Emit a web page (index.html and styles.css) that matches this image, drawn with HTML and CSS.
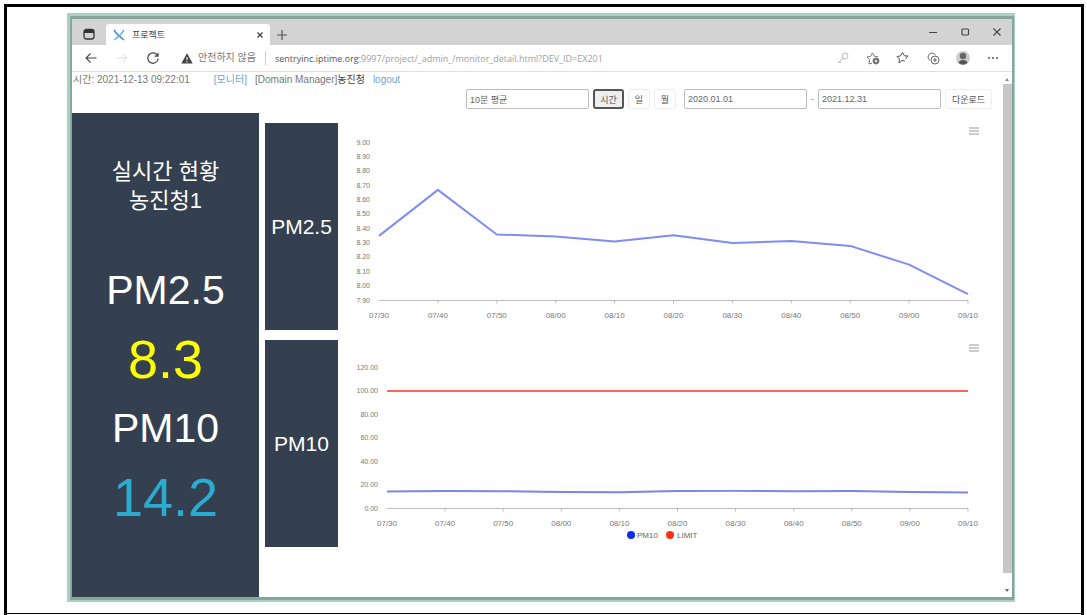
FILE: index.html
```html
<!DOCTYPE html>
<html lang="ko">
<head>
<meta charset="utf-8">
<title>프로젝트</title>
<link rel="stylesheet" href="styles.css">
</head>
<body>
<div class="sheet">
<div class="cell">
<div class="window">
<div class="window-inner">
  <header class="titlebar">
    <button class="tab-menu" aria-label="탭 메뉴"><svg width="12" height="12" viewBox="0 0 12 12"><rect x="1" y="1.500" width="10" height="9.500" rx="2.500" fill="none" stroke="#333" stroke-width="1.300"/><path d="M1 5V3.500Q1 1.500 3 1.500H9Q11 1.500 11 3.500V5Z" fill="#333"/></svg></button>
    <div class="tab">
      <svg width="12" height="12" viewBox="0 0 12 12" fill="none" stroke="#3b8fe0" stroke-width="1.500"><path d="M1 1Q4 6 11 11"/><path d="M11 1Q8 6 1 11" stroke="#74b4ee"/></svg>
      <span class="tab-title">프로젝트</span>
      <button class="tab-close" aria-label="탭 닫기"><svg width="6" height="6" viewBox="0 0 6 6" stroke="#444" stroke-width="1.300"><path d="M.5.5l5 5M5.500.5l-5 5"/></svg></button>
    </div>
    <button class="new-tab" aria-label="새 탭"><svg width="10" height="10" viewBox="0 0 10 10" stroke="#555" stroke-width="1.200"><path d="M5 0v10M0 5h10"/></svg></button>
    <div class="window-controls">
      <button aria-label="최소화"><svg width="10" height="10" viewBox="0 0 10 10" stroke="#444"><path d="M1 5.500h8"/></svg></button>
      <button aria-label="최대화"><svg width="10" height="10" viewBox="0 0 10 10" fill="none" stroke="#444" stroke-width="1.200"><rect x="2" y="2" width="6.500" height="6" rx="1"/></svg></button>
      <button aria-label="닫기"><svg width="10" height="10" viewBox="0 0 10 10" stroke="#444" stroke-width="1.100"><path d="M1.500 1.500l7 7M8.500 1.500l-7 7"/></svg></button>
    </div>
  </header>

  <div class="addressbar">
    <button class="nav" aria-label="뒤로"><svg width="12" height="12" viewBox="0 0 12 12" fill="none" stroke="#444" stroke-width="1.100"><path d="M11.500 6H1M5.500 1.500L1 6l4.500 4.500"/></svg></button>
    <button class="nav" aria-label="앞으로"><svg width="12" height="12" viewBox="0 0 12 12" fill="none" stroke="#ddd"><path d="M1 6h10M6.500 2L11 6l-4.500 4"/></svg></button>
    <button class="nav" aria-label="새로 고침"><svg width="12" height="12" viewBox="0 0 12 12" fill="none" stroke="#444" stroke-width="1.200"><path d="M10.800 4A5.200 5.200 0 1 0 11.200 6.500M11 .8V4.200H7.500"/></svg></button>
    <svg class="warn" width="12" height="11" viewBox="0 0 12 11"><path d="M6 .3L11.700 10.500H.3Z" fill="#444"/><path d="M6 4v3.300M6 8.200v1.200" stroke="#fff" stroke-width="1.100"/></svg>
    <span class="insecure">안전하지 않음</span>
    <span class="url"><b>sentryinc.iptime.org</b>:9997/project/_admin_/monitor_detail.html?DEV_ID=EX201</span>
    <div class="browser-tools">
      <button aria-label="비밀번호"><svg width="14" height="14" viewBox="0 0 14 14" fill="none" stroke="#bbb"><circle cx="9" cy="5" r="3"/><path d="M7 7.500L2.500 11.500H5"/></svg></button>
      <button aria-label="즐겨찾기에 추가"><svg width="14" height="14" viewBox="0 0 14 14" fill="none" stroke="#777"><path d="M6 12L3 13 3.500 8.500 1 6l3.500-.7L6.500 2l2 3.300 3.500.5"/><circle cx="10" cy="10" r="3" fill="#666"/><path d="M10 8.500v3M8.500 10h3" stroke="#fff"/></svg></button>
      <button aria-label="즐겨찾기"><svg width="14" height="14" viewBox="0 0 14 14" fill="none" stroke="#555"><path d="M9 10L6 9.500 3 12l.5-4L1 5.500l3.500-.6L6.500 1.500l2 3.400H12L9.500 8"/></svg></button>
      <button aria-label="컬렉션"><svg width="14" height="14" viewBox="0 0 14 14" fill="none" stroke="#666"><path d="M4 9.500A4 4 0 1 1 9.500 4"/><circle cx="9" cy="9" r="4"/><path d="M9 7v4M7 9h4"/></svg></button>
      <button aria-label="프로필"><svg width="14" height="14" viewBox="0 0 14 14"><circle cx="7" cy="7" r="7" fill="#ccc"/><circle cx="7" cy="5" r="3.200" fill="#666"/><path d="M2.500 12Q3 9 7 9t4.500 3Q7 15.500 2.500 12Z" fill="#555"/></svg></button>
      <button aria-label="설정 및 기타"><svg width="14" height="14" viewBox="0 0 14 14" fill="#555"><circle cx="3" cy="7" r="1"/><circle cx="7" cy="7" r="1"/><circle cx="11" cy="7" r="1"/></svg></button>
    </div>
  </div>

  <div class="viewport">
    <div class="page">
      <div class="status"><span>시간: 2021-12-13 09:22:01</span><a class="monitor" href="#monitor">[모니터]</a><span>[Domain Manager]<span class="name">농진청</span></span><a class="logout" href="#logout">logout</a></div>
      <form class="filters">
        <input class="field" type="text" aria-label="평균 단위" value="10분 평균">
        <button class="btn active" type="button">시간</button>
        <button class="btn" type="button">일</button>
        <button class="btn" type="button">월</button>
        <input class="field start" type="text" aria-label="시작일" value="2020.01.01">
        <span class="dash">-</span>
        <input class="field" type="text" aria-label="종료일" value="2021.12.31">
        <button class="btn download" type="button">다운로드</button>
      </form>
      <main class="dashboard">
        <aside class="live">
          <h1 class="live-title">실시간 현황<br>농진청1</h1>
          <div class="metric">PM2.5</div>
          <div class="value yellow">8.3</div>
          <div class="metric">PM10</div>
          <div class="value blue">14.2</div>
        </aside>
        <div class="charts">
          <section class="row">
            <h2 class="label">PM2.5</h2>
            <div class="chart"><svg id="pm25" viewBox="0 0 664 207" role="img" aria-label="PM2.5 차트"></svg>
            <button class="menu" aria-label="차트 메뉴"><svg width="10" height="8" viewBox="0 0 10 8" stroke="#999"><path d="M0 1h10M0 4h10M0 7h10"/></svg></button></div>
          </section>
          <section class="row">
            <h2 class="label">PM10</h2>
            <div class="chart"><svg id="pm10" viewBox="0 0 664 207" role="img" aria-label="PM10 차트"></svg>
            <button class="menu" aria-label="차트 메뉴"><svg width="10" height="8" viewBox="0 0 10 8" stroke="#999"><path d="M0 1h10M0 4h10M0 7h10"/></svg></button></div>
          </section>
        </div>
      </main>
    </div>
    <div class="scrollbar"><span class="arrow up"></span><span class="thumb"></span><span class="arrow down"></span></div>
  </div>
</div>
</div>
</div>
</div>
<script src="charts.js"></script>
</body>
</html>
```
FILE: styles.css
```css
* { box-sizing: border-box; }
body {
  margin: 0;
  background: #fff;
  font-family: "Liberation Sans", "Noto Sans CJK KR", sans-serif;
  font-size: 10px;
  color: #777;
}
button {
  border: 0;
  padding: 0;
  background: none;
  font: inherit;
  color: inherit;
  display: flex;
  align-items: center;
  justify-content: center;
}
svg { display: block; }
a { color: #6fa6d4; text-decoration: none; }

.sheet {
  margin: 4px 3px 0 4px;
  min-height: calc(100vh - 4px);
  border: 3px solid #000;
  border-bottom: 0;
  padding-bottom: 1px;
  display: flex;
}
.cell {
  flex: 1;
  min-width: 0;
  display: flex;
  padding: 6px 66px 11px 60px;
  border-bottom: 1px solid #000;
}
.window {
  flex: 1;
  min-width: 0;
  display: flex;
  border: solid #a6d1c4;
  border-width: 3px 1px 2px 3px;
}
.window-inner {
  flex: 1;
  min-width: 0;
  display: flex;
  flex-direction: column;
  border: solid #87a59a;
  border-width: 3px 2px 3px 2px;
}

.titlebar {
  height: 26px;
  display: flex;
  background: #d3d3d3;
}
.tab-menu { width: 34px; padding-top: 4px; }
.tab {
  width: 164px;
  margin-top: 5px;
  padding: 0 7px;
  display: flex;
  align-items: center;
  gap: 7px;
  background: #fff;
  border-radius: 3px 3px 0 0;
  font-size: 9px;
  color: #444;
}
.tab-close { margin-left: auto; }
.new-tab { width: 24px; padding-top: 5px; }
.window-controls { margin-left: auto; display: flex; padding-right: 10px; gap: 22px; }

.addressbar {
  height: 27px;
  display: flex;
  align-items: center;
  padding: 0 12px 0 13px;
  border-bottom: 1px solid #e2e2e2;
  white-space: nowrap;
}
.nav { margin-right: 19px; }
.warn { margin: 0 5px 0 3px; }
.insecure { padding-right: 9px; border-right: 1px solid #ccc; line-height: 14px; }
.url { padding-left: 9px; color: #a0a0a0; font-family: "Open Sans", sans-serif; font-size: 9px; }
.url b { font-weight: 400; color: #555; }
.browser-tools { margin-left: auto; display: flex; gap: 16px; }

.viewport { flex: 1; display: flex; min-height: 0; }
.page { flex: 1; min-width: 0; display: flex; flex-direction: column; }
.status {
  height: 16px;
  padding-left: 1px;
  display: flex;
  line-height: 16px;
  white-space: nowrap;
}
.monitor { margin: 0 8px 0 24px; }
.name { color: #444; }
.logout { margin-left: 8px; }

.filters {
  height: 25px;
  display: flex;
  align-items: flex-start;
  justify-content: flex-end;
  gap: 4px;
  padding: 1px 10px 0 0;
  font-size: 9px;
}
.field {
  width: 123px;
  height: 20px;
  border: 1px solid #bbb;
  border-radius: 2px;
  padding: 0 3px;
  font: inherit;
  color: #666;
}
.start { margin-left: 4px; }
.dash { line-height: 20px; }
.btn {
  width: 22px;
  height: 20px;
  border: 1px solid #eee;
  border-radius: 3px;
  color: #555;
}
.active { width: 31px; border: 2px solid #555; background: #eee; }
.download { width: 47px; }

.dashboard { flex: 1; display: flex; align-items: stretch; }
.live {
  width: 187px;
  padding-top: 44px;
  background: #344050;
  color: #fff;
  text-align: center;
}
.live-title { margin: 0 0 41px; font-size: 22px; font-weight: 400; line-height: 29px; }
.metric { font-size: 41px; line-height: 69px; }
.value { font-size: 54px; line-height: 69px; }
.yellow { color: #ff0; }
.blue { color: #2cabd1; }

.charts {
  flex: 1;
  min-width: 0;
  display: flex;
  flex-direction: column;
  gap: 10px;
  padding: 10px 0 0 6px;
}
.row { display: flex; }
.label {
  width: 73px;
  margin: 0;
  display: flex;
  align-items: center;
  justify-content: center;
  background: #344050;
  color: #fff;
  font-size: 21px;
  font-weight: 400;
}
.chart { flex: 1; min-width: 0; position: relative; }
.chart > svg { width: 100%; height: auto; }
.menu { position: absolute; top: 4px; right: 23px; }

.tick-y { font-size: 7px; fill: #777; text-anchor: end; }
.tick-x { font-size: 8px; fill: #777; text-anchor: middle; }
.legend { font-size: 8px; fill: #666; }
.grid { stroke: #fbfbfb; }
.axis { stroke: #bbb; fill: none; }
.line { fill: none; stroke-width: 2; stroke-linejoin: round; }

.scrollbar {
  width: 10px;
  padding: 6px 0 5px;
  display: flex;
  flex-direction: column;
  align-items: center;
}
.thumb { flex: 1; width: 9px; margin: 3px 0 16px; background: #c6c6c6; }
.arrow { border: 2px solid transparent; }
.up { border-bottom: 3px solid #888; border-top: 0; }
.down { border-top: 3px solid #666; border-bottom: 0; }
```
FILE: charts.js
```javascript
const NS = "http://www.w3.org/2000/svg";
const times = ["07/30", "07/40", "07/50", "08/00", "08/10", "08/20", "08/30", "08/40", "08/50", "09/00", "09/10"];

function add(svg, tag, attrs, text) {
  const el = document.createElementNS(NS, tag);
  for (const key in attrs) el.setAttribute(key, attrs[key]);
  if (text) el.textContent = text;
  svg.appendChild(el);
}

function draw(id, o) {
  const svg = document.getElementById(id);
  const right = 630;
  const step = (right - o.left) / (times.length - 1);
  const gap = (o.bottom - o.top) / (o.labels.length - 1);
  o.labels.forEach((label, i) => {
    const y = o.top + gap * i;
    add(svg, "line", { class: "grid", x1: o.left, x2: right, y1: y, y2: y });
    add(svg, "text", { class: "tick-y", x: o.left - 9, y: y + 2 }, label);
  });
  add(svg, "path", { class: "axis", d: `M${o.left} ${o.bottom}H${right}` });
  times.forEach((time, i) => {
    const x = o.left + step * i;
    if (i) add(svg, "path", { class: "axis", d: `M${x} ${o.bottom}v3` });
    add(svg, "text", { class: "tick-x", x, y: o.bottom + 17 }, time);
  });
  o.series.forEach(s => {
    const points = s.values.map((v, i) =>
      `${o.left + step * i},${o.bottom - (v - o.min) / (o.max - o.min) * (o.bottom - o.top)}`).join(" ");
    add(svg, "polyline", { class: "line", points, stroke: s.color });
  });
}

draw("pm25", {
  left: 41, top: 19.5, bottom: 177.5, min: 7.9, max: 9,
  labels: ["9.00", "8.90", "8.80", "8.70", "8.60", "8.50", "8.40", "8.30", "8.20", "8.10", "8.00", "7.90"],
  series: [{ color: "#7f8cf2", values: [8.35, 8.67, 8.36, 8.345, 8.31, 8.355, 8.3, 8.315, 8.28, 8.15, 7.945] }]
});
draw("pm10", {
  left: 49, top: 27.5, bottom: 168.5, min: 0, max: 120,
  labels: ["120.00", "100.00", "80.00", "60.00", "40.00", "20.00", "0.00"],
  series: [
    { color: "#ff6656", values: Array(11).fill(100) },
    { color: "#7a86e6", values: [14.5, 14.8, 14.7, 14, 13.8, 14.8, 15, 14.6, 14.8, 14, 13.7] }
  ]
});
const pm10 = document.getElementById("pm10");
add(pm10, "circle", { cx: 293, cy: 195, r: 4, fill: "#0a2cf5" });
add(pm10, "text", { class: "legend", x: 299, y: 198 }, "PM10");
add(pm10, "circle", { cx: 332, cy: 195, r: 4, fill: "#ff3214" });
add(pm10, "text", { class: "legend", x: 339, y: 198 }, "LIMIT");
```
